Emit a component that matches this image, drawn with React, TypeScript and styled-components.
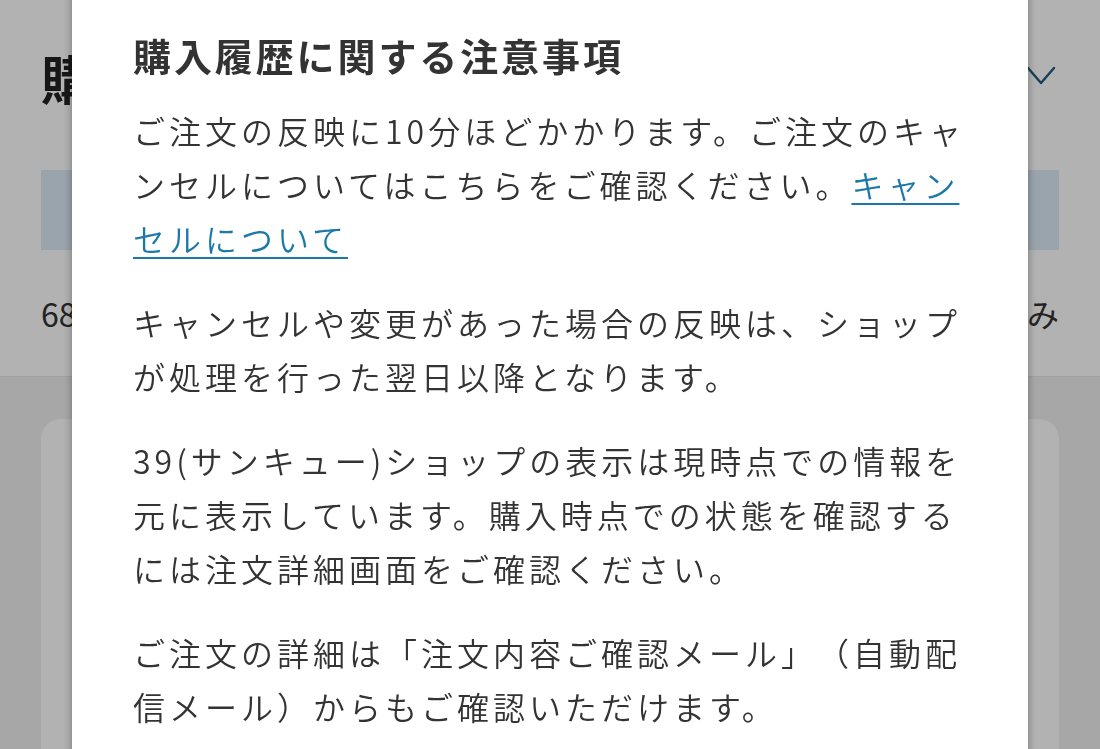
import React from "react";
import styled, { createGlobalStyle } from "styled-components";

const Global = createGlobalStyle`
  html, body { margin: 0; padding: 0; background: #ffffff; }
  body {
    font-family: "Noto Sans CJK JP", "Noto Sans", sans-serif;
    color: #333333;
    overflow: hidden;
    text-spacing-trim: space-all;
  }
  * { box-sizing: border-box; }
`;

const Page = styled.div`
  width: 1100px;
  height: 749px;
  display: flex;
  flex-direction: column;
  background: #f0f0f0;
`;

const Top = styled.div`
  background: #ffffff;
  height: 377px;
  padding: 0 41px;
  display: flex;
  flex-direction: column;
  border-bottom: 1px solid #e6e6e6;
`;

const HeaderRow = styled.div`
  height: 160px;
  display: flex;
  align-items: center;
  justify-content: space-between;
`;

const PageTitle = styled.h1`
  margin: 0;
  font-size: 52px;
  font-weight: 700;
  color: #222222;
  line-height: 1;
  transform: translateY(-2px);
`;

const Chevron = styled.svg`
  width: 30px;
  height: 20px;
  margin-right: 3px;
  transform: translateY(-4px);
`;

const Notice = styled.div`
  margin-top: 10px;
  height: 80px;
  background: #ddebf7;
`;

const CountRow = styled.div`
  display: flex;
  justify-content: space-between;
  align-items: center;
  height: 126px;
  font-size: 32px;
  color: #333333;
`;

const Bottom = styled.div`
  flex: 1;
  padding: 42px 41px 0;
`;

const Card = styled.div`
  height: 400px;
  background: #ffffff;
  border-radius: 20px;
`;

const Overlay = styled.div`
  position: fixed;
  inset: 0;
  background: rgba(0, 0, 0, 0.3);
  display: flex;
  justify-content: center;
  align-items: flex-start;
`;

const Modal = styled.div`
  width: 956px;
  margin-top: -40px;
  background: #ffffff;
  border-radius: 16px;
  box-shadow: 0 0 10px rgba(0, 0, 0, 0.35);
  padding: 69px 61px 40px;
`;

const ModalTitle = styled.h2`
  margin: 0 0 22px;
  font-size: 38px;
  line-height: 52px;
  font-weight: 700;
  letter-spacing: 2.9px;
  color: #333333;
`;

const Para = styled.p`
  margin: 0 0 30px;
  font-size: 32px;
  line-height: 54px;
  letter-spacing: 4px;
  font-weight: 350;
  color: #333333;
  white-space: nowrap;
  text-spacing-trim: space-all;
`;

const Link = styled.a`
  color: #1b78a8;
  text-decoration: underline;
  text-decoration-thickness: 2px;
  text-underline-offset: 5px;
`;

export default function App() {
  return (
    <>
      <Global />
      <Page>
        <Top>
          <HeaderRow>
            <PageTitle>購入履歴</PageTitle>
            <Chevron viewBox="0 0 30 20" fill="none">
              <path d="M2 2 L15 17 L28 2" stroke="#1f5c7c" strokeWidth="2.4" strokeLinecap="round" strokeLinejoin="round" />
            </Chevron>
          </HeaderRow>
          <Notice />
          <CountRow>
            <span>68件</span>
            <span>絞り込み</span>
          </CountRow>
        </Top>
        <Bottom>
          <Card />
        </Bottom>
      </Page>
      <Overlay>
        <Modal>
          <ModalTitle>購入履歴に関する注意事項</ModalTitle>
          <Para>
            ご注文の反映に10分ほどかかります。ご注文のキャ
            <br />
            ンセルについてはこちらをご確認ください。<Link href="#">キャン<br />セルについて</Link>
          </Para>
          <Para>
            キャンセルや変更があった場合の反映は、ショップ
            <br />
            が処理を行った翌日以降となります。
          </Para>
          <Para>
            39(サンキュー)ショップの表示は現時点での情報を
            <br />
            元に表示しています。購入時点での状態を確認する
            <br />
            には注文詳細画面をご確認ください。
          </Para>
          <Para>
            ご注文の詳細は「注文内容ご確認メール」（自動配
            <br />
            信メール）からもご確認いただけます。
          </Para>
        </Modal>
      </Overlay>
    </>
  );
}
